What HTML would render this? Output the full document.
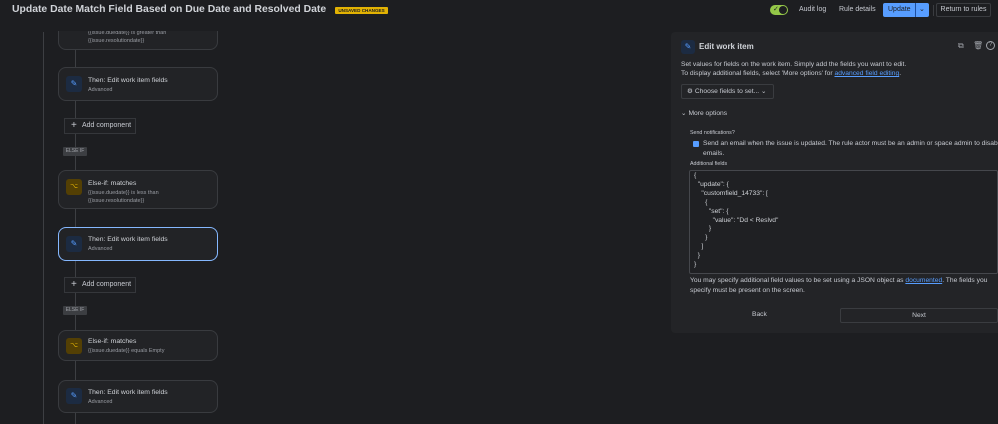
<!DOCTYPE html>
<html><head><meta charset="utf-8"><style>
*{box-sizing:border-box;margin:0;padding:0}
body{width:998px;height:424px;overflow:hidden;background:#1d1e21;font-family:"Liberation Sans",sans-serif;color:#c7cad1;position:relative}
.a{position:absolute}
.title{left:12px;top:4px;font-size:10.4px;font-weight:bold;color:#d0d3d8;white-space:nowrap}
.badge{left:335px;top:7px;width:53px;height:7px;background:#e2b203;color:#1d1e21;font-size:4.6px;font-weight:bold;line-height:7px;text-align:center;border-radius:1px;white-space:nowrap;overflow:hidden}
.vl{background:#3d3f43;width:1px}
.card{position:absolute;left:58px;width:160px;background:#222326;border:1px solid #393b3f;border-radius:8px}
.card .ic{position:absolute;left:7px;width:16px;height:16px;border-radius:3px}
.card .t{position:absolute;left:29px;font-size:6.8px;color:#d0d3d8;white-space:nowrap}
.card .s{position:absolute;left:29px;font-size:5.5px;color:#9a9da4;line-height:8px;white-space:nowrap}
.blue{background:#1c2b42}
.yel{background:#533f04}
.add{position:absolute;left:64px;width:72px;height:16px;border:1px solid #35373b;background:#1f2023;font-size:7px;color:#c7cad1;line-height:14px;padding-left:17px}
.add:before{content:"+";position:absolute;left:6px;top:0;font-size:10px;line-height:13px}
.else{position:absolute;left:63px;width:24px;height:9px;background:#3c3e42;color:#9fa2a8;font-size:5px;line-height:9px;text-align:center;border-radius:1px}
.panel{left:671px;top:32px;width:327px;height:301px;background:#232427;border-radius:4px 0 0 4px}
.p{position:absolute;font-size:6.7px;color:#c7cad1;white-space:nowrap}
.lnk{color:#579dff;text-decoration:underline}
pre{font-family:"Liberation Sans",sans-serif;font-size:6.7px;line-height:8.9px;color:#d0d3d8}
</style></head><body>

<div class="a vl" style="left:43px;top:32px;height:392px"></div>
<div class="a vl" style="left:75px;top:32px;height:392px"></div>

<div class="card" style="top:20px;height:30px"><div class="s" style="top:8px">{{issue.duedate}} is greater than<br>{{issue.resolutiondate}}</div></div>
<div class="a" style="left:0;top:0;width:670px;height:31px;background:#1d1e21"></div>
<div class="a title">Update Date Match Field Based on Due Date and Resolved Date</div>
<div class="a badge">UNSAVED CHANGES</div>

<div class="a" style="left:770px;top:5px;width:18px;height:10px;border-radius:5px;background:#94c748"><div style="position:absolute;right:1px;top:1px;width:8px;height:8px;border-radius:4px;background:#1d1e21"></div><div style="position:absolute;left:3px;top:0;font-size:7px;color:#1d1e21;line-height:10px">✓</div></div>
<div class="a p" style="left:799px;top:6px;font-size:7px">Audit log</div>
<div class="a p" style="left:839px;top:6px;font-size:7px">Rule details</div>
<div class="a" style="left:883px;top:3px;width:46px;height:14px;background:#579dff;border-radius:2px"><div style="position:absolute;left:5px;top:3px;font-size:7px;color:#1d1e21">Update</div><div style="position:absolute;left:32px;top:0;width:1px;height:14px;background:#1d4ea0"></div><div style="position:absolute;left:36px;top:2px;font-size:7px;color:#1d1e21">⌄</div></div>
<div class="a" style="left:933px;top:5px;width:1px;height:11px;background:#3a3c40"></div>
<div class="a" style="left:936px;top:3px;width:55px;height:14px;border:1px solid #3a3c40;border-radius:2px;font-size:7px;line-height:12px;text-align:center;color:#c7cad1">Return to rules</div>

<div class="card" style="top:67px;height:34px"><div class="ic blue" style="top:8px;color:#579dff;font-size:8px;text-align:center;line-height:16px">✎</div><div class="t" style="top:9px">Then: Edit work item fields</div><div class="s" style="top:18px">Advanced</div></div>
<div class="add" style="top:118px">Add component</div>
<div class="else" style="top:147px">ELSE IF</div>
<div class="card" style="top:170px;height:39px"><div class="ic yel" style="top:8px;color:#e2b203;font-size:7px;text-align:center;line-height:16px">⌥</div><div class="t" style="top:9px">Else-if: matches</div><div class="s" style="top:18px">{{issue.duedate}} is less than<br>{{issue.resolutiondate}}</div></div>
<div class="card" style="top:227px;height:34px;border-color:#85b8ff"><div class="ic blue" style="top:8px;color:#579dff;font-size:8px;text-align:center;line-height:16px">✎</div><div class="t" style="top:8px">Then: Edit work item fields</div><div class="s" style="top:17px">Advanced</div></div>
<div class="add" style="top:277px">Add component</div>
<div class="else" style="top:306px">ELSE IF</div>
<div class="card" style="top:330px;height:31px"><div class="ic yel" style="top:7px;color:#e2b203;font-size:7px;text-align:center;line-height:16px">⌥</div><div class="t" style="top:7px">Else-if: matches</div><div class="s" style="top:16px">{{issue.duedate}} equals Empty</div></div>
<div class="card" style="top:380px;height:33px"><div class="ic blue" style="top:7px;color:#579dff;font-size:8px;text-align:center;line-height:16px">✎</div><div class="t" style="top:8px">Then: Edit work item fields</div><div class="s" style="top:17px">Advanced</div></div>

<div class="a panel">
<div class="a" style="left:10px;top:8px;width:14px;height:14px;background:#1c2b42;border-radius:3px;color:#579dff;font-size:8px;text-align:center;line-height:14px">✎</div>
<div class="p" style="left:28px;top:10px;font-size:8px;font-weight:bold;color:#d0d3d8">Edit work item</div>
<div class="p" style="left:287px;top:9px;font-size:8px;color:#9fa2a8">⧉</div>
<div class="p" style="left:302px;top:9px;font-size:8px;color:#9fa2a8">🗑</div>
<div class="p" style="left:315px;top:9px;width:9px;height:9px;border:1px solid #9fa2a8;border-radius:50%;font-size:6px;line-height:7px;text-align:center;color:#9fa2a8">?</div>
<div class="p" style="left:10px;top:28px;line-height:9px">Set values for fields on the work item. Simply add the fields you want to edit.<br>To display additional fields, select 'More options' for <span class="lnk">advanced field editing</span>.</div>
<div class="a" style="left:10px;top:52px;width:93px;height:15px;border:1px solid #3a3c40;border-radius:2px;font-size:6.7px;line-height:13px;padding-left:5px;color:#c7cad1">⚙ Choose fields to set... ⌄</div>
<div class="p" style="left:10px;top:77px">⌄ More options</div>
<div class="p" style="left:19px;top:98px;font-size:5.3px">Send notifications?</div>
<div class="a" style="left:22px;top:109px;width:6px;height:6px;background:#579dff;border-radius:1px"></div>
<div class="p" style="left:32px;top:107px;line-height:9.5px">Send an email when the issue is updated. The rule actor must be an admin or space admin to disable<br>emails.</div>
<div class="p" style="left:19px;top:129px;font-size:5.3px">Additional fields</div>
<div class="a" style="left:18px;top:138px;width:309px;height:104px;background:#1f2023;border:1px solid #45474c;border-radius:2px;padding:1px 0 0 4px"><pre>{
  "update": {
    "customfield_14733": [
      {
        "set": {
          "value": "Dd &lt; Reslvd"
        }
      }
    ]
  }
}</pre></div>
<div class="p" style="left:19px;top:244px;line-height:9.5px">You may specify additional field values to be set using a JSON object as <span class="lnk">documented</span>. The fields you<br>specify must be present on the screen.</div>
<div class="p" style="left:81px;top:279px">Back</div>
<div class="a" style="left:169px;top:276px;width:158px;height:15px;border:1px solid #3a3c40;border-radius:2px;font-size:6.7px;line-height:13px;text-align:center;color:#c7cad1">Next</div>
</div>
</body></html>
